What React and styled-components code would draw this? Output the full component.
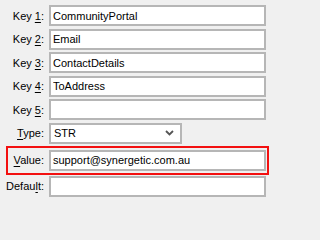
import React from 'react';
import styled, { createGlobalStyle } from 'styled-components';

const GlobalStyle = createGlobalStyle`
    html, body {
        margin: 0;
        padding: 0;
        background: #f0f0f0;
    }

    body {
        font-family: "Liberation Sans", Arial, sans-serif;
        font-size: 11px;
        color: #000;
    }
`;

const Form = styled.div`
    box-sizing: border-box;
    display: flex;
    flex-direction: column;
    gap: 2.6px;

    width: 271px;
    height: 202px;
    padding: 5px 5px 0 0;
`;

const Row = styled.div`
    display: grid;
    grid-template-columns: ${p => p.$labelWidth || 44}px 1fr;
    column-gap: 5px;
    align-items: center;

    height: 21px;
`;

const Highlight = styled.div`
    margin: -0.6px -3px -1.6px 6px;
    padding: 2px 1px 2px 0;

    border: 2px solid #f31010;
`;

const Label = styled.label`
    text-align: right;
    white-space: nowrap;

    u {
        text-decoration-thickness: 1px;
        text-underline-offset: 2px;
    }
`;

const Field = styled.input`
    box-sizing: border-box;
    height: 21px;
    width: 100%;
    margin: 0;
    padding: 0 2px;

    border: 2px solid #b6b6b6;
    border-radius: 0;
    outline: none;

    background: #fff;

    font-family: inherit;
    font-size: 11px;
    color: #000;
`;

const Combo = styled.div`
    box-sizing: border-box;
    display: flex;
    align-items: center;
    justify-content: space-between;

    height: 21px;
    width: 133px;
    padding: 0 6px 0 3px;

    border: 2px solid #b6b6b6;

    background: #fff;
`;

const Chevron = () => (
    <svg width="9" height="6" viewBox="0 0 9 6">
        <path d="M1 1 L4.5 4.5 L8 1" fill="none" stroke="#555" strokeWidth="1.8" />
    </svg>
);

const keys = ['CommunityPortal', 'Email', 'ContactDetails', 'ToAddress', ''];

const App = () => {
    return (
        <>
            <GlobalStyle />
            <Form>
                {keys.map((k, i) => (
                    <Row key={i}>
                        <Label>Key <u>{i + 1}</u>:</Label>
                        <Field defaultValue={k} readOnly />
                    </Row>
                ))}

                <Row>
                    <Label><u>T</u>ype:</Label>
                    <Combo>
                        <span>STR</span>
                        <Chevron />
                    </Combo>
                </Row>

                <Highlight>
                    <Row $labelWidth={36}>
                        <Label><u>V</u>alue:</Label>
                        <Field defaultValue="support@synergetic.com.au" readOnly />
                    </Row>
                </Highlight>

                <Row>
                    <Label>Defau<u>l</u>t:</Label>
                    <Field defaultValue="" readOnly />
                </Row>
            </Form>
        </>
    );
};

export default App;
